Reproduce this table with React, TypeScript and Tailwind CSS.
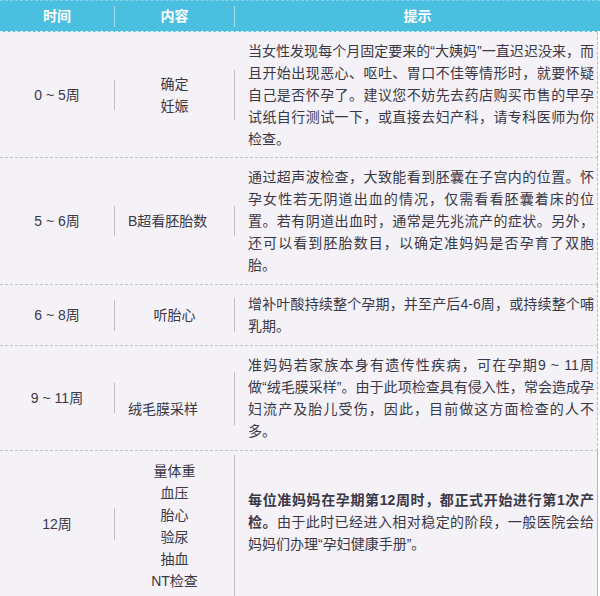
import React from 'react';

type Row = {
  height: string;
  time: string;
  content: string[];
  contentClass: string;
  sep1: string;
  sep2: string;
  lines: React.ReactNode[];
  textClass: string;
};

const rows: Row[] = [
  {
    height: 'h-[126px] border-b border-dashed border-[#c4c2cb]',
    time: '0 ~ 5周',
    content: ['确定', '妊娠'],
    contentClass: 'text-center',
    sep1: 'h-[30px] self-center',
    sep2: 'h-[50px] self-center',
    lines: [
      '当女性发现每个月固定要来的“大姨妈”一直迟迟没来，而',
      '且开始出现恶心、呕吐、胃口不佳等情形时，就要怀疑',
      '自己是否怀孕了。建议您不妨先去药店购买市售的早孕',
      '试纸自行测试一下，或直接去妇产科，请专科医师为你',
      '检查。',
    ],
    textClass: '',
  },
  {
    height: 'h-[127px] border-b border-dashed border-[#c4c2cb]',
    time: '5 ~ 6周',
    content: ['B超看胚胎数'],
    contentClass: 'pl-[13px] text-left',
    sep1: 'h-[30px] self-center',
    sep2: 'h-[30px] self-center',
    lines: [
      '通过超声波检查，大致能看到胚囊在子宫内的位置。怀',
      '孕女性若无阴道出血的情况，仅需看看胚囊着床的位',
      '置。若有阴道出血时，通常是先兆流产的症状。另外，',
      '还可以看到胚胎数目，以确定准妈妈是否孕育了双胞',
      '胎。',
    ],
    textClass: '',
  },
  {
    height: 'h-[61px] border-b border-dashed border-[#c4c2cb]',
    time: '6 ~ 8周',
    content: ['听胎心'],
    contentClass: 'text-center',
    sep1: 'h-[31px] self-center',
    sep2: 'h-[34px] self-center',
    lines: ['增补叶酸持续整个孕期，并至产后4-6周，或持续整个哺', '乳期。'],
    textClass: '',
  },
  {
    height: 'h-[105px] border-b border-dashed border-[#c4c2cb]',
    time: '9 ~ 11周',
    content: ['绒毛膜采样'],
    contentClass: 'pl-[13px] pt-[22px] text-left',
    sep1: 'h-[30px] self-center',
    sep2: 'h-[53px] self-center',
    lines: [
      '准妈妈若家族本身有遗传性疾病，可在孕期9 ~ 11周',
      '做“绒毛膜采样”。由于此项检查具有侵入性，常会造成孕',
      '妇流产及胎儿受伤，因此，目前做这方面检查的人不',
      '多。',
    ],
    textClass: '',
  },
  {
    height: 'h-[145px]',
    time: '12周',
    content: ['量体重', '血压', '胎心', '验尿', '抽血', 'NT检查'],
    contentClass: 'text-center leading-[21px] pt-[4px]',
    sep1: 'h-[32px] self-center',
    sep2: 'self-stretch mt-[4px]',
    lines: [
      <span className="font-bold">每位准妈妈在孕期第12周时，都正式开始进行第1次产</span>,
      <>
        <span className="font-bold">检。</span>由于此时已经进入相对稳定的阶段，一般医院会给
      </>,
      '妈妈们办理“孕妇健康手册”。',
    ],
    textClass: 'pb-[4px]',
  },
];

const App: React.FC = () => {
  return (
    <div
      className="w-[600px] h-[596px] overflow-hidden bg-white text-[14px] text-[#3a3846]"
      style={{ fontFamily: '"Liberation Sans", "Noto Sans CJK SC", sans-serif' }}
    >
      {/* 表头 */}
      <div className="flex h-[32px] items-center bg-[#4bbfdf] border-t border-[#7fd3ea] border-b border-dashed border-b-[#e9f6fb] font-bold text-white">
        <div className="w-[114px] text-center">时间</div>
        <div className="w-px h-[21px] bg-white/50" />
        <div className="w-[119px] text-center">内容</div>
        <div className="w-px h-[21px] bg-white/50" />
        <div className="flex-1 text-center">提示</div>
      </div>

      {rows.map((row, i) => (
        <div
          key={i}
          className={`flex items-center bg-[#f4f2f7] border-r border-r-[#b9b5c0] mr-[2px] ${row.height}`}
        >
          <div className="w-[114px] text-center leading-[22px]">{row.time}</div>
          <div className={`w-px bg-[#c2bec9] ${row.sep1}`} />
          <div className={`w-[119px] leading-[22px] ${row.contentClass}`}>
            {row.content.map((c, j) => (
              <div key={j}>{c}</div>
            ))}
          </div>
          <div className={`w-px bg-[#c2bec9] ${row.sep2}`} />
          <div className={`flex-1 pl-[13px] pr-[3px] leading-[22px] ${row.textClass}`}>
            {row.lines.map((line, j) => (
              <div
                key={j}
                className={
                  j < row.lines.length - 1
                    ? 'whitespace-nowrap text-justify [text-align-last:justify]'
                    : 'whitespace-nowrap'
                }
              >
                {line}
              </div>
            ))}
          </div>
        </div>
      ))}
    </div>
  );
};

export default App;
